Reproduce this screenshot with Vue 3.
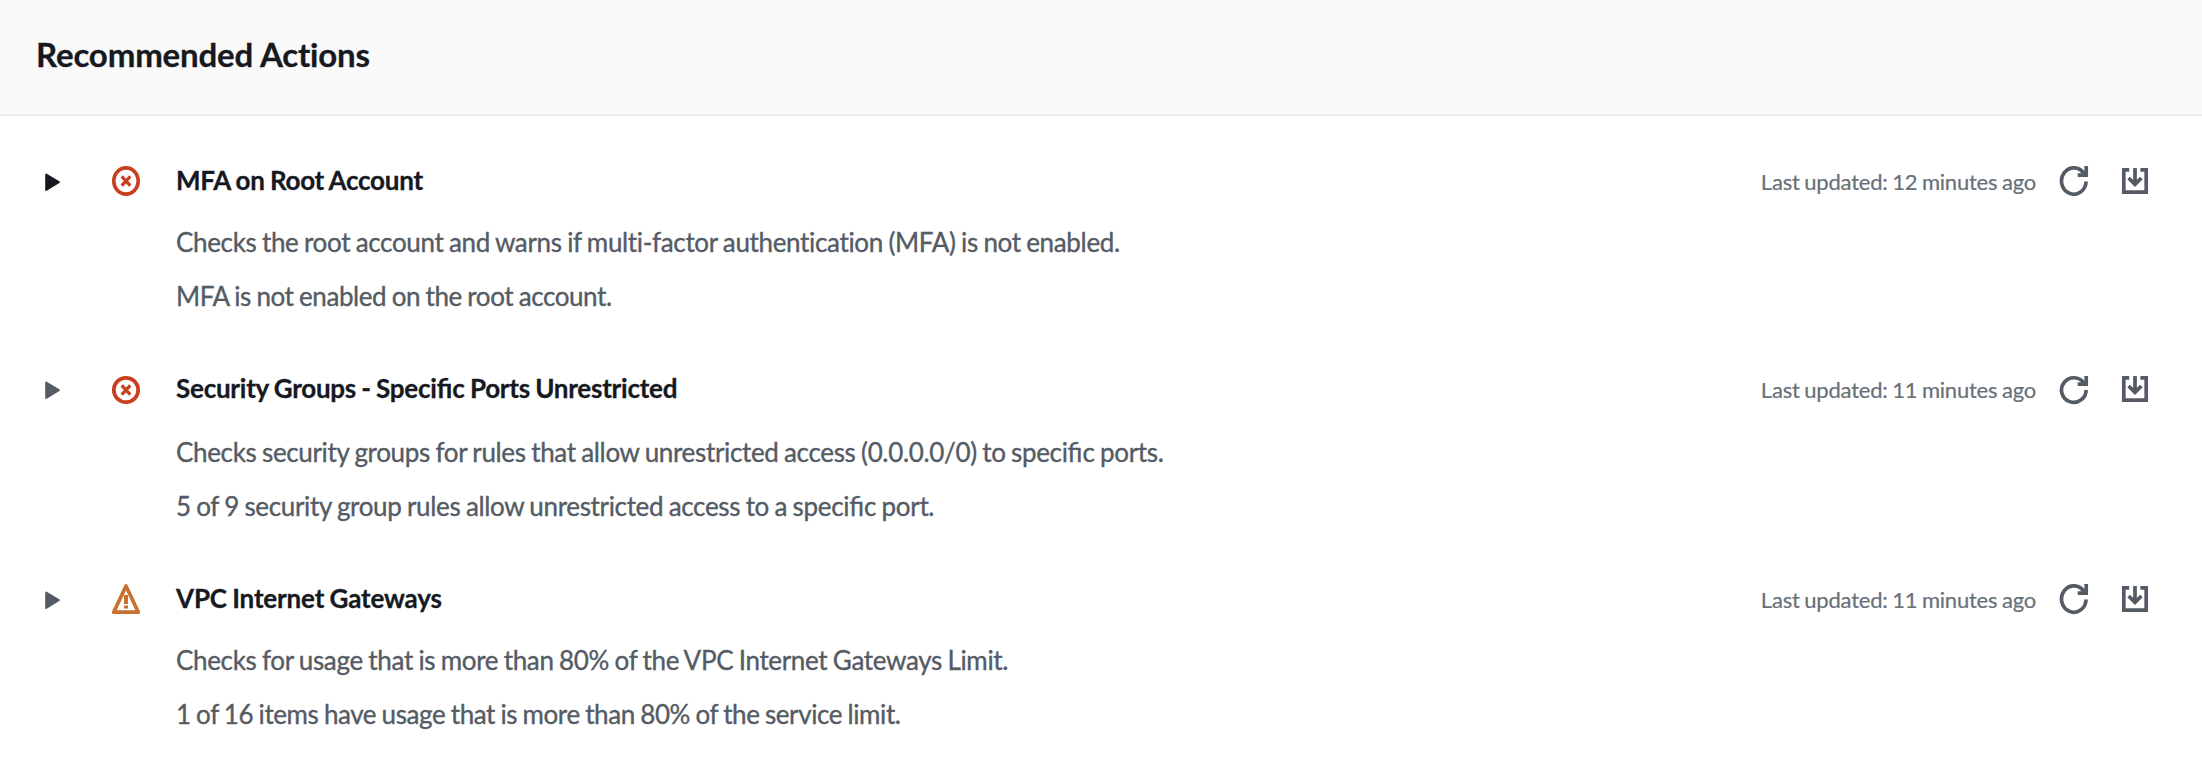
<script setup>
const checks = [
  {
    id: 'mfa',
    level: 'error',
    title: 'MFA on Root Account',
    updated: 'Last updated: 12 minutes ago',
    lines: [
      'Checks the root account and warns if multi-factor authentication (MFA) is not enabled.',
      'MFA is not enabled on the root account.',
    ],
  },
  {
    id: 'ports',
    level: 'error',
    title: 'Security Groups - Specific Ports Unrestricted',
    updated: 'Last updated: 11 minutes ago',
    lines: [
      'Checks security groups for rules that allow unrestricted access (0.0.0.0/0) to specific ports.',
      '5 of 9 security group rules allow unrestricted access to a specific port.',
    ],
  },
  {
    id: 'vpc',
    level: 'warning',
    title: 'VPC Internet Gateways',
    updated: 'Last updated: 11 minutes ago',
    lines: [
      'Checks for usage that is more than 80% of the VPC Internet Gateways Limit.',
      '1 of 16 items have usage that is more than 80% of the service limit.',
    ],
  },
]

// Letter-spacing turns ligatures off, so "fi" pairs are split out and set without it.
const parts = (text) => text.split(/(fi)/)
</script>

<template>
  <section class="panel">
    <header class="panel-header">
      <h2>Recommended Actions</h2>
    </header>
    <article v-for="check in checks" :key="check.id" class="check" :class="check.id">
      <svg class="caret" viewBox="0 0 20 40" width="20" height="40">
        <path d="M4.2 14.6 L16.8 22.2 L4.2 29.9 Z" />
      </svg>
      <svg v-if="check.level === 'error'" class="status error" viewBox="0 0 32 40" width="32" height="40">
        <ellipse cx="16" cy="21" rx="12.2" ry="13.1" />
        <path d="M11.7 16.3 L20.3 25.7 M20.3 16.3 L11.7 25.7" />
      </svg>
      <svg v-else class="status warning" viewBox="0 0 32 40" width="32" height="40">
        <path class="outline" d="M16 8 L28.3 34.2 H3.7 Z" />
        <path class="mark" d="M14 17 h4 v9 h-4 Z M14 27.6 h4 v3 h-4 Z" />
      </svg>
      <div class="content">
        <h3><span v-for="(part, i) in parts(check.title)" :key="i" :class="{ lig: part === 'fi' }">{{ part }}</span></h3>
        <div class="details">
          <p v-for="line in check.lines" :key="line"><span v-for="(part, i) in parts(line)" :key="i" :class="{ lig: part === 'fi' }">{{ part }}</span></p>
        </div>
      </div>
      <div class="tools">
        <span class="updated">{{ check.updated }}</span>
        <svg class="refresh" viewBox="0 0 32 40" width="32" height="40">
          <path v-if="check.id === 'ports'" d="M25.4 15.8 A12.3 12.3 0 1 0 27.1 22" />
          <path v-else d="M25.5 14.5 A12.3 13.2 0 1 0 27.1 21.5" />
          <path :d="check.id === 'ports' ? 'M27.2 8 V16.2 H18.7' : 'M27.2 6 V15.2 H18.7'" />
        </svg>
        <svg class="download" viewBox="0 0 32 40" width="32" height="40">
          <path d="M9.2 9.8 H3.8 V32.2 H26.2 V9.8 H20.4" />
          <path d="M15 8 V24 M8.6 18 L15 24.4 L21.4 18" />
        </svg>
      </div>
    </article>
  </section>
</template>

<style>
body {
  background: #fff;
}
</style>

<style scoped>
.panel {
  width: 100%;
  height: 768px;
  overflow: hidden;
  font-family: Lato, "Liberation Sans", sans-serif;
  color: #16191f;
}
.panel-header {
  box-sizing: border-box;
  height: 116px;
  margin-bottom: 44px;
  padding: 33px 36px 0;
  background: #fafafa;
  border-bottom: 2px solid #ebebeb;
}
h2,
h3,
p {
  margin: 0;
  white-space: nowrap;
}
h2 {
  font-size: 33px;
  line-height: 42px;
  font-weight: 700;
  letter-spacing: -0.16px;
  -webkit-text-stroke: 0.3px #16191f;
}
.check {
  display: grid;
  grid-template-columns: 20px 32px 1fr auto;
  align-items: start;
  height: 208px;
  padding: 0 50px 0 42px;
}
.check.ports {
  height: 210px;
}
svg {
  display: block;
  fill: none;
  stroke: #545b64;
  stroke-width: 3.7;
}
.caret path {
  fill: #545b64;
  stroke-width: 2;
  stroke-linejoin: round;
}
.mfa .caret path {
  fill: #16191f;
  stroke: #16191f;
}
.status {
  margin-left: 48px;
}
.error {
  stroke: #c7401f;
}
.error path {
  stroke-width: 3.2;
}
.ports .error ellipse {
  cy: 22px;
  ry: 12.2px;
}
.ports .error path {
  transform: translateY(1px);
}
.warning .outline {
  stroke: #c8702f;
  stroke-linejoin: round;
}
.warning .mark {
  fill: #c8702f;
  stroke: none;
}
.content {
  margin-left: 82px;
}
h3 {
  font-size: 26px;
  line-height: 40px;
  font-weight: 700;
  letter-spacing: -0.24px;
  word-spacing: -0.8px;
  -webkit-text-stroke: 0.3px #16191f;
}
.vpc h3 {
  letter-spacing: -0.16px;
}
.details {
  display: flex;
  flex-direction: column;
  gap: 14px;
  padding-top: 22px;
  font-size: 26px;
  line-height: 40px;
  color: #545b64;
  letter-spacing: -0.34px;
  word-spacing: -0.8px;
  -webkit-text-stroke: 0.35px #545b64;
}
.mfa p:last-child,
.vpc p:last-child {
  letter-spacing: -0.41px;
}
.lig {
  letter-spacing: 0;
}
.ports .details {
  padding-top: 24px;
}
.tools {
  display: flex;
}
.updated {
  padding-top: 2px;
  font-size: 22px;
  line-height: 39px;
  color: #687078;
  letter-spacing: -0.21px;
  word-spacing: -0.8px;
  -webkit-text-stroke: 0.2px #687078;
}
.refresh {
  margin-left: 23px;
}
.download {
  margin-left: 29px;
}
</style>
